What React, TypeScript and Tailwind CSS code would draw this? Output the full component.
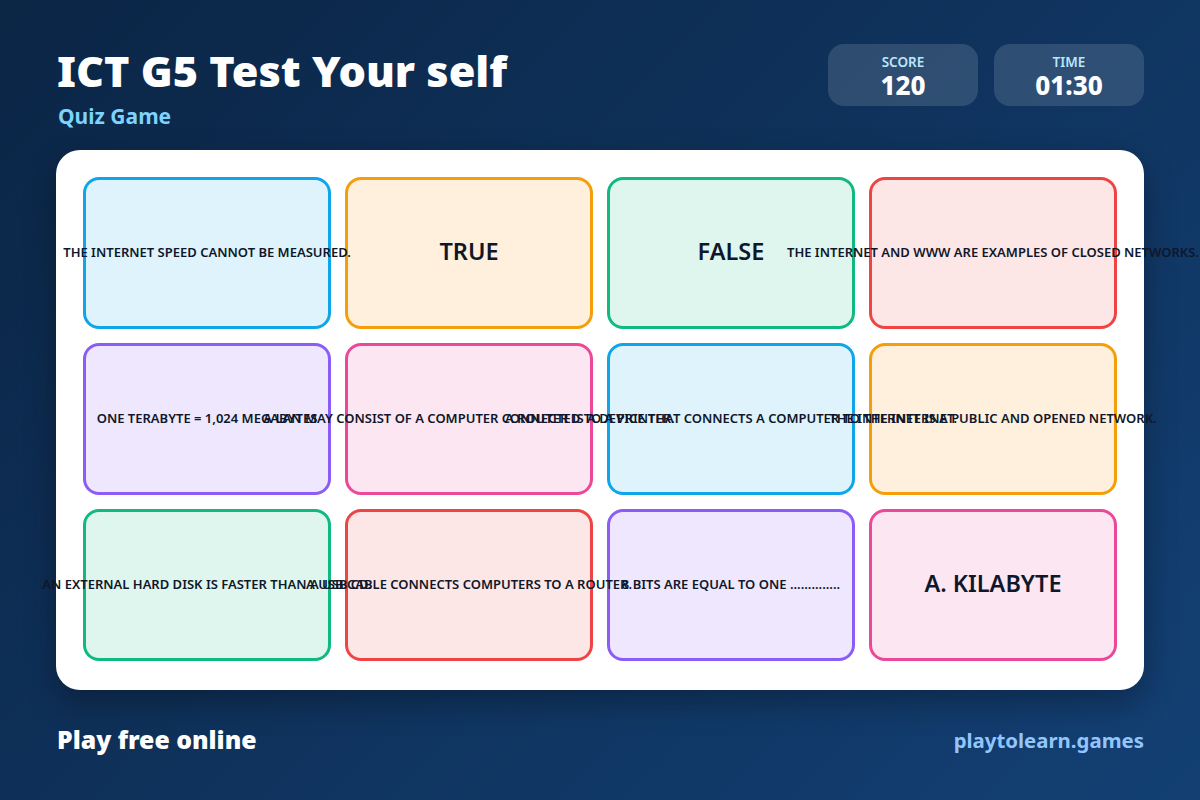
const tiles = [
  { text: "THE INTERNET SPEED CANNOT BE MEASURED.", tone: "border-[#0ea5e9] bg-[#dff3fc]" },
  { text: "TRUE", tone: "border-[#f59e0b] bg-[#fef0dd]", big: true },
  { text: "FALSE", tone: "border-[#10b981] bg-[#def6ee]", big: true },
  { text: "THE INTERNET AND WWW ARE EXAMPLES OF CLOSED NETWORKS.", tone: "border-[#ef4444] bg-[#fde6e6]" },
  { text: "ONE TERABYTE = 1,024 MEGABYTES", tone: "border-[#8b5cf6] bg-[#eee7fd]" },
  { text: "A LAN MAY CONSIST OF A COMPUTER CONNECTED TO A PRINTER.", tone: "border-[#ec4899] bg-[#fce6f1]" },
  { text: "A ROUTER IS A DEVICE THAT CONNECTS A COMPUTER TO THE INTERNET.", tone: "border-[#0ea5e9] bg-[#dff3fc]" },
  { text: "THE INTERNET IS A PUBLIC AND OPENED NETWORK.", tone: "border-[#f59e0b] bg-[#fef0dd]" },
  { text: "AN EXTERNAL HARD DISK IS FASTER THAN A USB CD.", tone: "border-[#10b981] bg-[#def6ee]" },
  { text: "A USB CABLE CONNECTS COMPUTERS TO A ROUTER.", tone: "border-[#ef4444] bg-[#fde6e6]" },
  { text: "8 BITS ARE EQUAL TO ONE ..............", tone: "border-[#8b5cf6] bg-[#eee7fd]" },
  { text: "A. KILABYTE", tone: "border-[#ec4899] bg-[#fce6f1]", big: true },
]

function Stat({ label, value }: { label: string; value: string }) {
  return (
    <div className="w-[150px] h-[62px] rounded-2xl bg-white/[0.13] flex flex-col items-center pt-[10px]">
      <span className="text-[13.5px] leading-[17px] font-semibold text-[#bae6fd]">{label}</span>
      <span className="text-[26px] leading-[29px] font-extrabold text-white">{value}</span>
    </div>
  )
}

export default function App() {
  return (
    <div className="w-[1200px] h-[800px] overflow-hidden px-14 pt-11 bg-[linear-gradient(135deg,#0b2545,#134074)] font-['Noto_Sans','Open_Sans',sans-serif]">
      {/* Header */}
      <div className="h-[106px] flex justify-between items-start">
        <div>
          <h1 className="text-[43.2px] leading-[54px] font-black text-white ml-[1px]">ICT G5 Test Your self</h1>
          <p className="text-[21px] leading-[28px] font-bold text-[#7dd3fc] mt-[4px] ml-[2px]">Quiz Game</p>
        </div>
        <div className="flex gap-4">
          <Stat label="SCORE" value="120" />
          <Stat label="TIME" value="01:30" />
        </div>
      </div>

      {/* Board */}
      <div className="h-[540px] bg-white rounded-3xl px-[27px] pt-[27px] grid grid-cols-4 grid-rows-[152px_152px_152px] gap-[14px] shadow-[0_12px_32px_rgba(0,0,0,0.3)]">
        {tiles.map((t) => (
          <div key={t.text} className={`rounded-2xl border-[3px] flex items-center justify-center whitespace-nowrap text-[#0f172a] font-semibold ${t.tone} ${t.big ? "text-[23.5px] leading-[30px] pb-[4px]" : "text-[13px] leading-[18px] pb-[2px]"}`}>
            {/* relative keeps long text above the next tile's background */}
            <span className="relative">{t.text}</span>
          </div>
        ))}
      </div>

      {/* Footer */}
      <div className="h-[100px] flex justify-between items-center">
        <span className="text-[24.8px] font-black text-white ml-[1px]">Play free online</span>
        <span className="text-[20.4px] font-bold text-[#93c5fd]">playtolearn.games</span>
      </div>
    </div>
  )
}
